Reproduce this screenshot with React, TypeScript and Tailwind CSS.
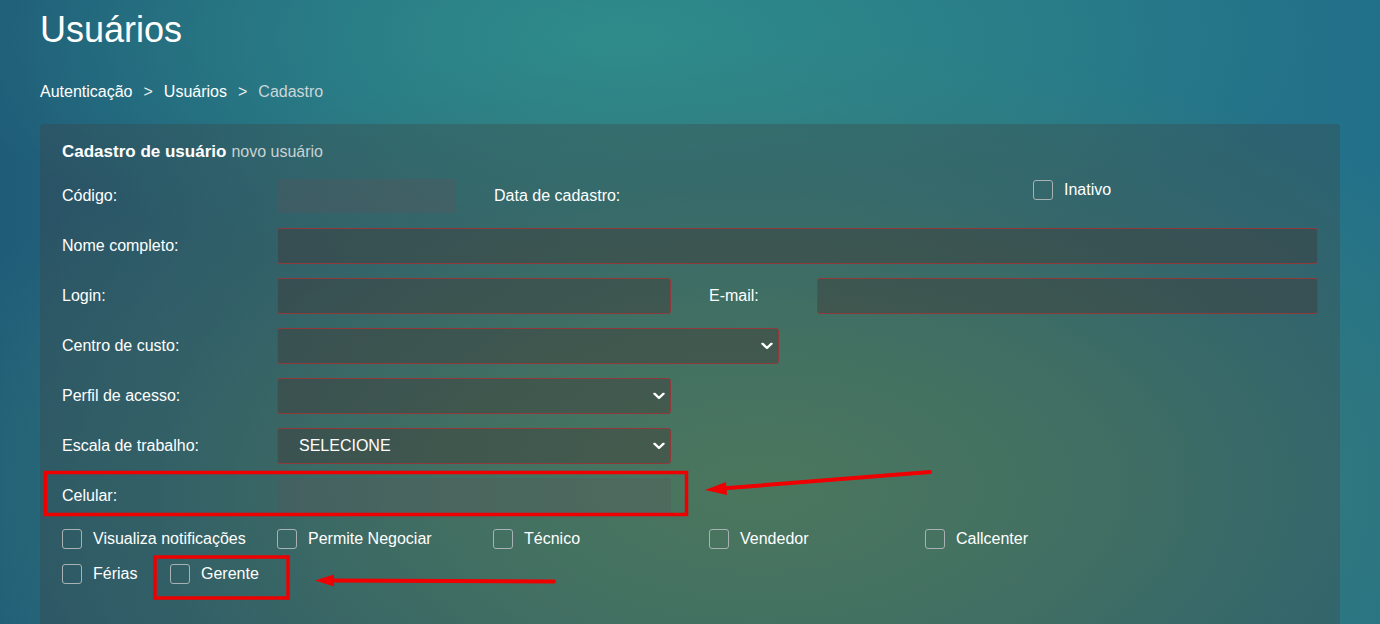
import React from "react";

const inputBordered =
  "h-[36px] rounded-[3px] border border-[#8e3a3a] bg-[rgba(62,52,50,0.4)]";
const inputPlain = "rounded-[3px] bg-[rgba(92,84,88,0.3)]";

function Chevron() {
  return (
    <svg width="12" height="7" viewBox="0 0 12 7" className="absolute right-[5px] top-1/2 -translate-y-1/2">
      <polyline points="1.5,1.2 6,5.5 10.5,1.2" fill="none" stroke="#ffffff" strokeWidth="2.4" strokeLinecap="round" strokeLinejoin="round" />
    </svg>
  );
}

function Check({ label, w }: { label: string; w?: string }) {
  return (
    <div className={`flex items-center ${w ?? ""}`}>
      <span className="block w-[20px] h-[20px] rounded-[3px] border-[1.5px] border-[#a8b2b4]" />
      <span className="ml-[11px] text-[16px] text-white">{label}</span>
    </div>
  );
}

function Row({ label, children }: { label: string; children?: React.ReactNode }) {
  return (
    <div className="flex h-[50px] items-center">
      <div className="w-[215px] shrink-0 text-[16px]">{label}</div>
      {children}
    </div>
  );
}

export default function App() {
  return (
    <div className="relative h-[624px] w-full overflow-hidden font-['Liberation_Sans',Arial,sans-serif] text-white bg-[radial-gradient(ellipse_75%_85%_at_55%_78%,rgba(82,145,108,0.95)_0%,rgba(74,138,110,0.8)_30%,rgba(60,126,118,0.45)_58%,rgba(50,118,125,0)_85%),radial-gradient(ellipse_50%_40%_at_45%_6%,rgba(48,142,138,0.9)_0%,rgba(40,128,136,0)_100%),linear-gradient(90deg,#1f5c78_0%,#257588_45%,#257487_75%,#22718a_100%)]">
      <div className="px-10 pt-[10px]">
        <h1 className="text-[36px] leading-[40px] font-normal">Usuários</h1>
        <div className="mt-[30px] flex items-center text-[16px] leading-[24px]">
          <span>Autenticação</span>
          <span className="mx-[11px] text-[#e8eeee]">&gt;</span>
          <span>Usuários</span>
          <span className="mx-[11px] text-[#e8eeee]">&gt;</span>
          <span className="text-[#c9d6d8]">Cadastro</span>
        </div>
      </div>

      <div className="mx-10 mt-[20px] h-[520px] rounded-[4px] bg-[rgba(66,62,60,0.3)] px-[22px] pt-[16px]">
        <div className="text-[17px] leading-[24px]">
          <span className="font-bold">Cadastro de usuário</span>
          <span className="ml-[5px] text-[16px] text-[#c8d2d2]">novo usuário</span>
        </div>

        <div className="mt-[7px]">
          <div className="flex h-[50px] items-center">
            <div className="w-[215px] shrink-0 text-[16px]">Código:</div>
            <div className={`${inputPlain} h-[34px] w-[179px]`} />
            <div className="ml-[38px] w-[539px] text-[16px]">Data de cadastro:</div>
            <div className="self-start mt-[7px]">
              <Check label="Inativo" />
            </div>
          </div>

          <Row label="Nome completo:">
            <div className={`${inputBordered} flex-1`} />
          </Row>

          <div className="flex h-[50px] items-center">
            <div className="w-[215px] shrink-0 text-[16px]">Login:</div>
            <div className={`${inputBordered} w-[394px]`} />
            <div className="ml-[38px] w-[108px] text-[16px]">E-mail:</div>
            <div className={`${inputBordered} flex-1`} />
          </div>

          <Row label="Centro de custo:">
            <div className={`${inputBordered} relative w-[502px]`}>
              <Chevron />
            </div>
          </Row>

          <Row label="Perfil de acesso:">
            <div className={`${inputBordered} relative w-[394px]`}>
              <Chevron />
            </div>
          </Row>

          <Row label="Escala de trabalho:">
            <div className={`${inputBordered} relative flex w-[394px] items-center pl-[21px] text-[16px]`}>
              SELECIONE
              <Chevron />
            </div>
          </Row>

          <Row label="Celular:">
            <div className={`${inputPlain} h-[36px] w-[394px]`} />
          </Row>

          <div className="flex h-[36px] items-center">
            <Check label="Visualiza notificações" w="w-[215px]" />
            <Check label="Permite Negociar" w="w-[216px]" />
            <Check label="Técnico" w="w-[216px]" />
            <Check label="Vendedor" w="w-[216px]" />
            <Check label="Callcenter" />
          </div>
          <div className="flex h-[34px] items-center">
            <Check label="Férias" w="w-[108px]" />
            <Check label="Gerente" />
          </div>
        </div>
      </div>

      <svg className="pointer-events-none absolute left-0 top-0" width="1380" height="624" viewBox="0 0 1380 624">
        <rect x="45.5" y="472.5" width="641" height="42" fill="none" stroke="#ee0000" strokeWidth="3.5" />
        <line x1="930" y1="472" x2="722" y2="488.5" stroke="#ee0000" strokeWidth="4" strokeLinecap="round" />
        <polygon points="705,490 726,482 727,495" fill="#ee0000" />
        <rect x="155" y="557" width="133" height="41" fill="none" stroke="#ee0000" strokeWidth="3.5" />
        <line x1="554" y1="581.5" x2="330" y2="580.5" stroke="#ee0000" strokeWidth="4" strokeLinecap="round" />
        <polygon points="315,580.5 334,574.5 334,586.5" fill="#ee0000" />
      </svg>
    </div>
  );
}
